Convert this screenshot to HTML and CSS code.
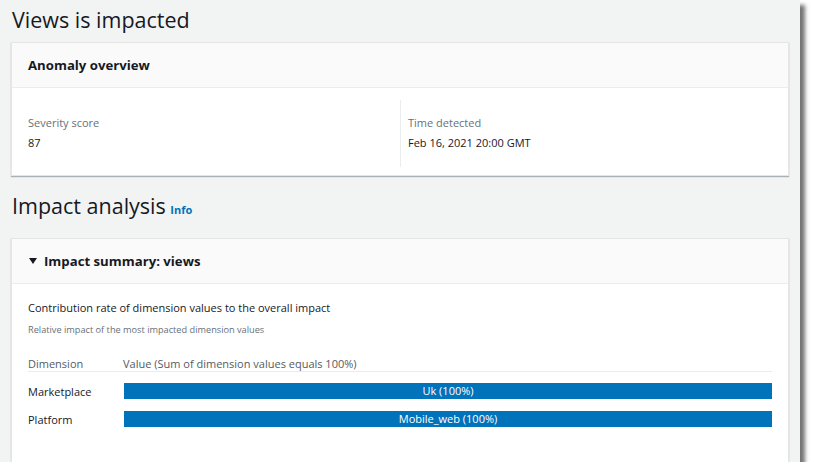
FILE: index.html
```html
<!DOCTYPE html>
<html>
<head>
  <title>Views is impacted</title>
  <link rel="stylesheet" href="styles.css">
</head>
<body>
  <div class="frame">
    <h1>Views is impacted</h1>

    <div class="card">
      <div class="card-header">Anomaly overview</div>
      <div class="card-body columns">
        <div class="col">
          <div class="label">Severity score</div>
          <div class="value">87</div>
        </div>
        <div class="col divider">
          <div class="label">Time detected</div>
          <div class="value">Feb 16, 2021 20:00 GMT</div>
        </div>
      </div>
    </div>

    <h1 class="section">Impact analysis <a class="info" href="#">Info</a></h1>

    <div class="card card-tall">
      <div class="card-header"><span class="caret"></span>Impact summary: views</div>
      <div class="card-body summary">
        <div class="chart-title">Contribution rate of dimension values to the overall impact</div>
        <div class="chart-sub">Relative impact of the most impacted dimension values</div>

        <div class="dim-table">
          <div class="dim-row dim-head">
            <div class="dim-name">Dimension</div>
            <div class="dim-value">Value (Sum of dimension values equals 100%)</div>
          </div>
          <div class="dim-row">
            <div class="dim-name">Marketplace</div>
            <div class="dim-value"><div class="bar" style="width: 100%">Uk (100%)</div></div>
          </div>
          <div class="dim-row">
            <div class="dim-name">Platform</div>
            <div class="dim-value"><div class="bar" style="width: 100%">Mobile_web (100%)</div></div>
          </div>
        </div>
      </div>
    </div>
  </div>
</body>
</html>
```

FILE: styles.css
```css
body {
  margin: 0;
  background: #fff;
  font-family: "Open Sans", "Noto Sans", sans-serif;
  color: #16191f;
}
.frame {
  width: 800px;
  height: 462px;
  overflow: hidden;
  background: #f2f3f3;
  box-shadow: 5px 5px 4px rgba(0, 0, 0, 0.55);
  padding: 0 11px 0 11px;
  box-sizing: border-box;
}
h1 {
  margin: 0;
  padding: 5px 0 0 1px;
  height: 42px;
  box-sizing: border-box;
  font-size: 21.5px;
  font-weight: 400;
  line-height: 30px;
}
h1.section {
  padding-top: 15px;
  height: 62px;
}
.info {
  color: #0073bb;
  font-size: 11px;
  font-weight: 700;
  text-decoration: none;
  margin-left: -1px;
}
.card {
  background: #fff;
  border: 1px solid #e4e6e6;
  box-shadow: 0 1px 1px rgba(0, 28, 36, 0.3);
}
.card-tall {
  height: 260px;
}
.card-header {
  height: 45px;
  box-sizing: border-box;
  padding: 0 16px;
  background: #fafafa;
  border-bottom: 1px solid #eaeded;
  display: flex;
  align-items: center;
  font-size: 13.2px;
  font-weight: 700;
}
.caret {
  width: 0;
  height: 0;
  border-left: 4px solid transparent;
  border-right: 4px solid transparent;
  border-top: 6px solid #16191f;
  margin: 0 7px 0 1px;
}
.card-body {
  padding: 12px 16px 8px;
}
.columns {
  display: grid;
  grid-template-columns: 372px 1fr;
}
.col {
  padding: 15px 0 16px;
}
.divider {
  border-left: 1px solid #eaeded;
  padding-left: 7px;
}
.label {
  font-size: 11px;
  color: #687078;
  line-height: 16px;
}
.value {
  font-size: 11px;
  line-height: 16px;
  margin-top: 4px;
}
.summary {
  padding-top: 16px;
}
.chart-title {
  font-size: 11px;
  line-height: 16px;
}
.chart-sub {
  font-size: 9.2px;
  color: #687078;
  line-height: 14px;
  margin-top: 7px;
}
.dim-table {
  margin-top: 19px;
}
.dim-row {
  display: flex;
  align-items: center;
  height: 28px;
  font-size: 11px;
}
.dim-head {
  height: 15px;
  line-height: 15px;
  align-items: flex-start;
  color: #545b64;
  border-bottom: 1px solid #eaeded;
  margin-bottom: 5px;
}
.dim-name {
  width: 95px;
  flex: none;
}
.dim-value {
  flex: 1;
  padding-right: 1px;
}
.bar {
  background: #0073bb;
  color: #fff;
  height: 16px;
  line-height: 16px;
  text-align: center;
  font-size: 11px;
  margin-left: 1px;
}
```
